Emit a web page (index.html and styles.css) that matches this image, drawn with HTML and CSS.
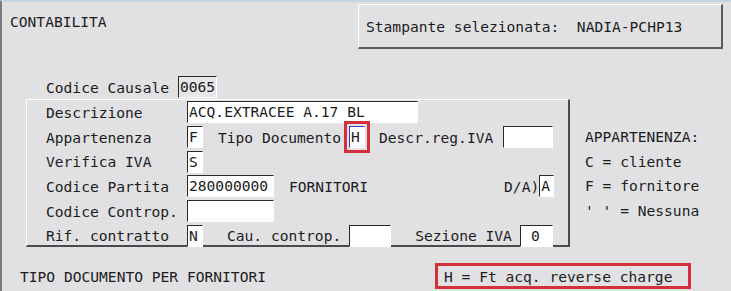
FILE: index.html
```html
<!DOCTYPE html>
<html lang="it">
<head>
  <meta charset="UTF-8" />
  <title>Contabilita - Codice Causale</title>
  <link rel="stylesheet" href="styles.css">
</head>
<body>
  <div class="screen">
    <div class="top">
      <div class="title">CONTABILITA</div>
      <div class="printer">Stampante selezionata:  NADIA-PCHP13</div>
    </div>

    <div class="row causale">
      <span class="lbl-short">Codice Causale</span>
      <span class="fld dim w-4">0065</span>
    </div>

    <div class="main">
      <div class="frame">
        <div class="row">
          <span class="lbl">Descrizione</span>
          <span class="fld w-desc">ACQ.EXTRACEE A.17 BL</span>
        </div>
        <div class="row">
          <span class="lbl">Appartenenza</span>
          <span class="fld w-1">F</span>
          <span class="txt tipo">Tipo Documento</span>
          <span class="fld w-1 focus">H</span>
          <span class="txt reg">Descr.reg.IVA</span>
          <span class="fld w-reg"></span>
        </div>
        <div class="row">
          <span class="lbl">Verifica IVA</span>
          <span class="fld w-1">S</span>
        </div>
        <div class="row">
          <span class="lbl">Codice Partita</span>
          <span class="fld w-part">280000000</span>
          <span class="txt forn">FORNITORI</span>
          <span class="txt da">D/A)</span>
          <span class="fld w-a">A</span>
        </div>
        <div class="row">
          <span class="lbl">Codice Controp.</span>
          <span class="fld w-part"></span>
        </div>
        <div class="row">
          <span class="lbl">Rif. contratto</span>
          <span class="fld w-1">N</span>
          <span class="txt cau">Cau. controp.</span>
          <span class="fld w-cau"></span>
          <span class="txt sez">Sezione IVA</span>
          <span class="fld w-sez num">0</span>
        </div>
      </div>

      <div class="legend">
        <div class="row">APPARTENENZA:</div>
        <div class="row">C = cliente</div>
        <div class="row">F = fornitore</div>
        <div class="row">' ' = Nessuna</div>
      </div>
    </div>

    <div class="bottom">
      <span>TIPO DOCUMENTO PER FORNITORI</span>
      <span class="hint">H = Ft acq. reverse charge</span>
    </div>
  </div>
</body>
</html>
```

FILE: styles.css
```css
body { margin: 0; background: #e1e1e4; font-family: "DejaVu Sans Mono", "Liberation Mono", monospace; font-size: 14.6px; color: #1c1c1c; }
.screen { width: 731px; height: 291px; box-sizing: border-box; border-left: 2px solid #7b7b7e; border-top: 2px solid #c3d3e4; overflow: hidden; }

.top { display: flex; justify-content: space-between; height: 73px; }
.title { margin: 11px 0 0 8px; }
.printer { display: flex; align-items: center; box-sizing: border-box; width: 365px; height: 45px; margin: 2px 8px 0 0; padding-left: 7px; white-space: pre; border-top: 1px solid #fff; border-left: 1px solid #fff; border-bottom: 2px solid #5a5a5c; border-right: 2px solid #5a5a5c; }

.row { display: flex; align-items: center; height: 24.7px; white-space: pre; }
.causale { height: 24px; padding-left: 44px; }
.lbl-short { width: 132px; }
.lbl { width: 141px; flex: none; }

.fld { display: inline-block; box-sizing: border-box; height: 22px; line-height: 20px; padding-left: 1px; background: #fff; border-top: 1px solid #2a2a2a; border-left: 1px solid #2a2a2a; border-bottom: 1px solid #fff; border-right: 1px solid #fff; flex: none; }
.fld.dim { background: #e6e6e9; }
.fld.focus { border-top-color: #3b3bd0; border-left-color: #3b3bd0; outline: 3px solid #d4303b; outline-offset: 2px; }
.fld.num { text-align: right; padding-right: 12px; }
.w-4 { width: 39px; }
.w-1 { width: 16px; }
.w-desc { width: 231px; }
.w-reg { width: 50px; }
.w-part { width: 87px; }
.w-a { width: 15px; }
.w-cau { width: 42px; }
.w-sez { width: 33px; }

.tipo { margin-left: 15px; margin-right: 8px; }
.reg { margin-left: 14px; margin-right: 10px; }
.forn { margin-left: 15px; }
.da { margin-left: 136px; }
.cau { margin-left: 24px; margin-right: 8px; }
.sez { margin-left: 24px; margin-right: 8px; }

.main { display: flex; }
.frame { box-sizing: border-box; width: 544px; height: 148px; margin-left: 24px; padding-left: 19px; border-top: 1px solid #fff; border-left: 1px solid #fff; border-bottom: 2px solid #4a4a4c; border-right: 2px solid #4a4a4c; }
.legend { margin-left: 15px; padding-top: 25px; }

.bottom { display: flex; align-items: center; height: 26px; margin-top: 16px; padding-left: 18px; }
.hint { box-sizing: border-box; width: 256px; height: 26px; margin-left: auto; margin-right: 40px; padding-left: 6px; display: flex; align-items: center; white-space: pre; border: 3px solid #d4303b; }
```
